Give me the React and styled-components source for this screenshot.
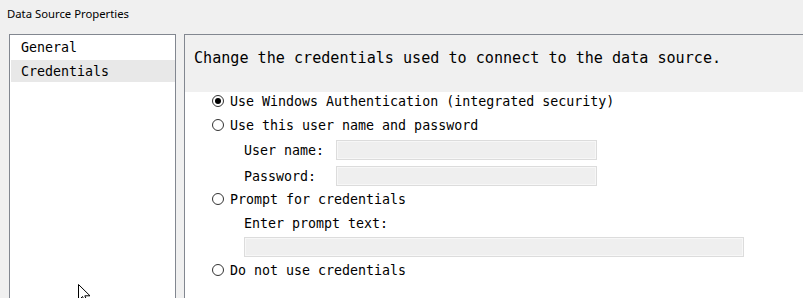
import styled, { createGlobalStyle } from "styled-components";

const GlobalStyle = createGlobalStyle`
  html, body {
    margin: 0;
    padding: 0;
    background: #f0f0f0;
  }
  body {
    width: 803px;
    height: 298px;
    overflow: hidden;
  }
`;

const Window = styled.div`
  position: relative;
  width: 803px;
  height: 298px;
  overflow: hidden;
  background: #f0f0f0;
  display: flex;
  flex-direction: column;
`;

const Title = styled.div`
  flex: none;
  height: 26px;
  padding-left: 7px;
  display: flex;
  align-items: center;
  font-family: "Segoe UI", "Noto Sans", sans-serif;
  font-size: 11.3px;
  color: #000;
`;

const Body = styled.div`
  flex: none;
  display: flex;
  padding: 8px 0 0 9px;
  gap: 8px;
  font-family: "DejaVu Sans Mono", "Liberation Mono", monospace;
  font-size: 13.3px;
  color: #000;
`;

const NavList = styled.div`
  flex: none;
  width: 167px;
  height: 300px;
  box-sizing: border-box;
  border: 1px solid #828790;
  background: #fff;
  padding: 1px 0 0 1px;
  display: flex;
  flex-direction: column;
  gap: 2px;
`;

const NavItem = styled.div`
  height: 22px;
  display: flex;
  align-items: center;
  padding-left: 10px;
  background: ${(p) => (p.$active ? "#e8e8e8" : "transparent")};
`;

const Panel = styled.div`
  flex: 1;
  height: 300px;
  border: 1px solid #828790;
  border-right: none;
  display: flex;
  flex-direction: column;
`;

const Header = styled.div`
  flex: none;
  height: 57px;
  box-sizing: border-box;
  padding: 13px 0 0 9px;
  font-size: 15.1px;
  line-height: 20px;
  background: #f0f0f0;
`;

const Content = styled.div`
  flex: 1;
  background: #fff;
  padding-left: 27px;
  display: flex;
  flex-direction: column;
`;

const Option = styled.label`
  height: 18px;
  margin-top: ${(p) => p.$mt || 0}px;
  display: flex;
  align-items: center;
  gap: 6px;
`;

const Radio = styled.span`
  width: 12px;
  height: 12px;
  box-sizing: border-box;
  border: 1px solid #333;
  border-radius: 50%;
  display: flex;
  align-items: center;
  justify-content: center;

  &::after {
    content: "";
    width: 6px;
    height: 6px;
    border-radius: 50%;
    background: ${(p) => (p.$checked ? "#000" : "transparent")};
  }
`;

const Field = styled.div`
  height: ${(p) => p.$h || 20}px;
  margin-top: ${(p) => p.$mt || 0}px;
  padding-left: 32px;
  display: flex;
  align-items: center;
`;

const FieldLabel = styled.span`
  width: 92px;
  flex: none;
`;

const TextBox = styled.div`
  width: ${(p) => p.$w}px;
  height: 20px;
  box-sizing: border-box;
  border: 1px solid #dcdcdc;
  box-shadow: inset 0 0 0 1px #f7f7f7;
  background: #efefef;
`;

const Cursor = styled.svg`
  position: absolute;
  left: 78px;
  top: 284px;
`;

export default function App() {
  return (
    <Window>
      <GlobalStyle />
      <Title>Data Source Properties</Title>
      <Body>
        <NavList>
          <NavItem>General</NavItem>
          <NavItem $active>Credentials</NavItem>
        </NavList>
        <Panel>
          <Header>Change the credentials used to connect to the data source.</Header>
          <Content>
            <Option>
              <Radio $checked />
              Use Windows Authentication (integrated security)
            </Option>
            <Option $mt={6}>
              <Radio />
              Use this user name and password
            </Option>
            <Field $mt={6}>
              <FieldLabel>User name:</FieldLabel>
              <TextBox $w={261} />
            </Field>
            <Field $mt={6}>
              <FieldLabel>Password:</FieldLabel>
              <TextBox $w={261} />
            </Field>
            <Option $mt={4}>
              <Radio />
              Prompt for credentials
            </Option>
            <Field $mt={6} $h={18}>
              Enter prompt text:
            </Field>
            <Field $mt={5}>
              <TextBox $w={500} />
            </Field>
            <Option $mt={4}>
              <Radio />
              Do not use credentials
            </Option>
          </Content>
        </Panel>
      </Body>
      <Cursor width="13" height="20" viewBox="0 0 13 20">
        <path
          d="M0.5 0.5 L0.5 16.5 L4.5 12.5 L7.5 19 L9.5 18 L6.8 11.8 L12 11.8 Z"
          fill="#fff"
          stroke="#000"
          strokeWidth="1"
        />
      </Cursor>
    </Window>
  );
}
